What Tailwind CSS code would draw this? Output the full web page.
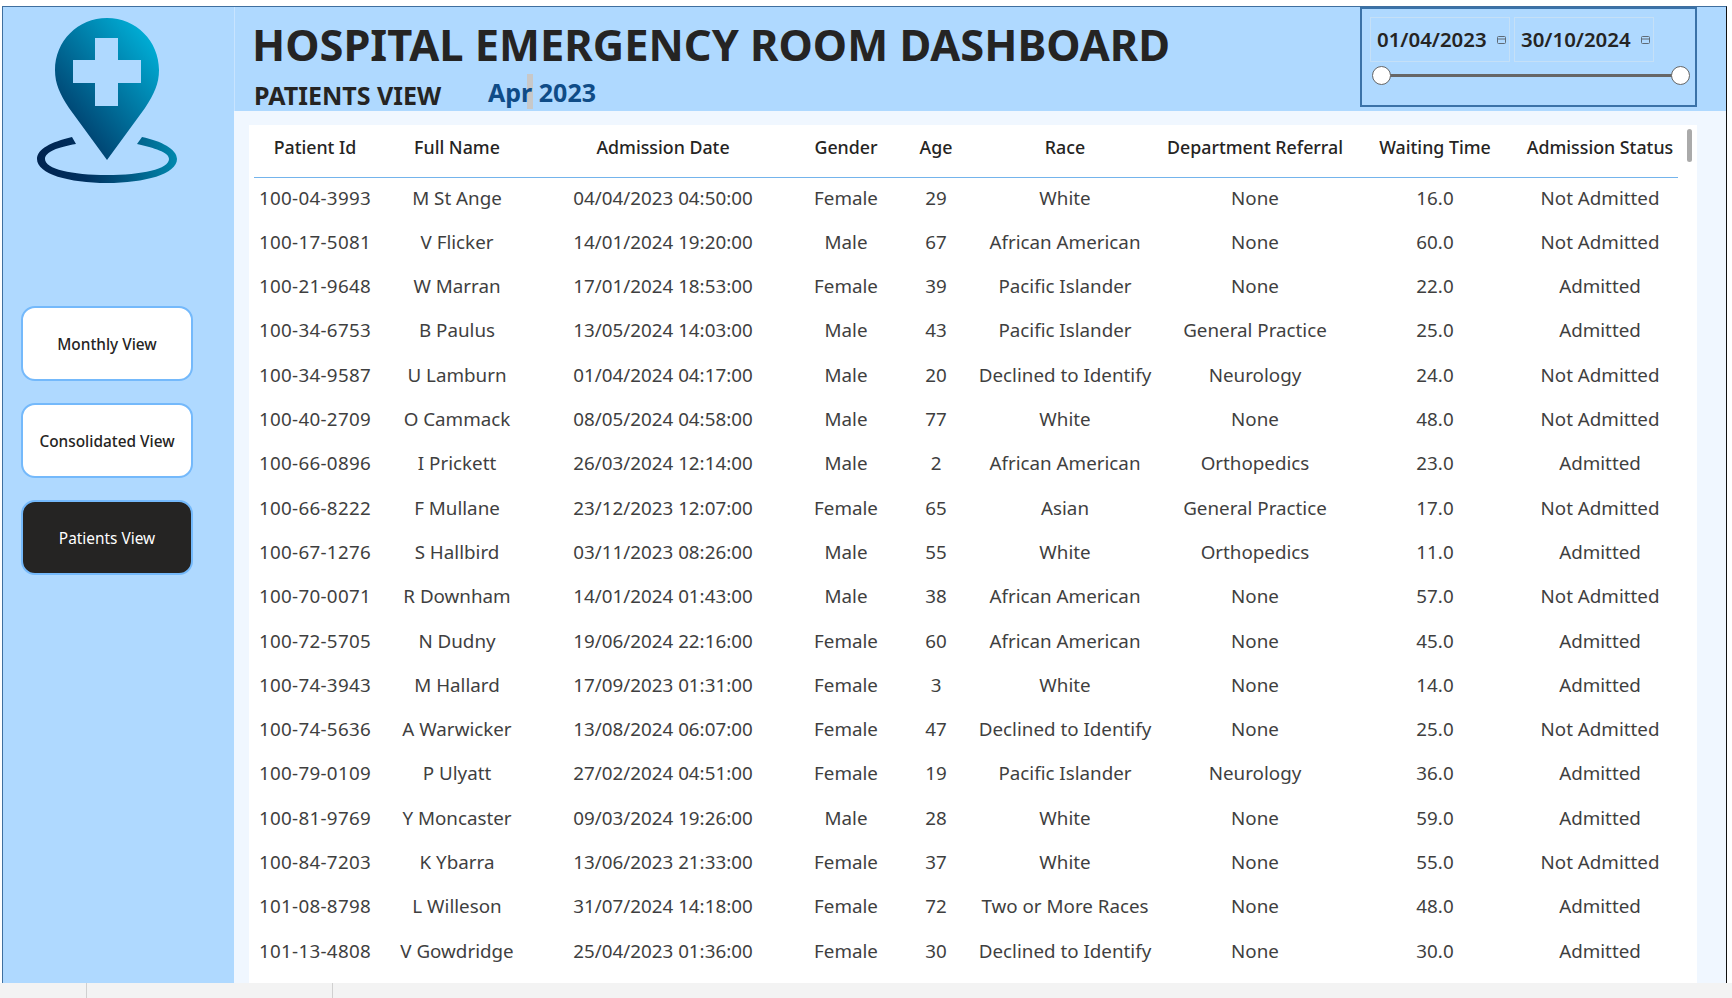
<!DOCTYPE html>
<html lang="en">
<head>
    <meta charset="UTF-8">
    <title>Hospital Emergency Room Dashboard</title>
    <script src="https://cdn.jsdelivr.net/npm/@tailwindcss/browser@4"></script>
</head>
<body class="h-screen flex flex-col bg-white overflow-hidden font-['Noto_Sans',sans-serif] text-[#252423]">
    <div class="h-[6px] shrink-0"></div>
    <div class="flex-1 min-h-0 flex ml-[2px] mr-[5px] border-t border-t-[#3f6f9f] border-l border-l-[#3f6f9f] border-r border-r-[#111]">
        <!-- Sidebar -->
        <aside class="w-[231px] shrink-0 bg-[#afd9ff] flex flex-col">
            <svg class="ml-[30px] mt-[10px] shrink-0" width="146" height="168" viewBox="33 17 146 168">
                <defs>
                    <linearGradient id="pin" x1="1" y1="0" x2="0.15" y2="0.95">
                        <stop offset="0" stop-color="#00bfe6"/>
                        <stop offset="1" stop-color="#00305f"/>
                    </linearGradient>
                    <linearGradient id="ring" x1="1" y1="0" x2="0" y2="0">
                        <stop offset="0" stop-color="#0088ad"/>
                        <stop offset="0.65" stop-color="#00305f"/>
                        <stop offset="1" stop-color="#00234f"/>
                    </linearGradient>
                </defs>
                <path fill="url(#pin)" fill-rule="evenodd" d="M107 18C78 18 55 41 55 70C55 84 60 94 69 108L107 160L145 108C154 94 159 84 159 70C159 41 136 18 107 18ZM95 38H118V60H141V83H118V106H95V83H73V60H95Z"/>
                <path fill="url(#ring)" d="M72 137C51 142 37 149 37 159C37 174 69 183 107 183C145 183 177 174 177 159C177 149 161 141 142 137L137 144C154 148 169 152 169 159C169 169 142 175 107 175C72 175 45 169 45 159C45 152 58 147 76 144Z"/>
            </svg>
            <nav class="ml-[18px] mt-[121px] flex flex-col gap-[22px] w-[172px] text-[15.4px] font-medium">
                <button class="h-[75px] pt-[3px] rounded-[14px] border-2 border-[#74b9fb] bg-white">Monthly View</button>
                <button class="h-[75px] pt-[3px] rounded-[14px] border-2 border-[#74b9fb] bg-white">Consolidated View</button>
                <button class="h-[75px] pt-[3px] rounded-[14px] border-2 border-[#74b9fb] bg-[#252423] text-white font-normal">Patients View</button>
            </nav>
        </aside>

        <main class="flex-1 min-w-0 flex flex-col bg-[#f0f7ff]">
            <!-- Header -->
            <header class="h-[104px] shrink-0 bg-[#afd9ff] border-l border-l-[#c8e4ff] flex justify-between relative">
                <div class="pl-[17px]">
                    <h1 class="text-[43.4px] leading-[58px] mt-[9px] font-bold whitespace-nowrap">HOSPITAL EMERGENCY ROOM DASHBOARD</h1>
                    <div class="flex mt-[1px]">
                        <h2 class="text-[25px] leading-[34px] font-bold w-[233px] pl-[2px] mt-[3px]">PATIENTS VIEW</h2>
                        <span class="text-[25px] leading-[34px] font-bold text-[#0f4c87] relative ml-[3px]"><span class="absolute left-[39px] top-[-1px] w-[6px] h-[35px] bg-[#c8c8c8]"></span><span class="relative">Apr</span> 2023</span>
                    </div>
                </div>
                <!-- Date slicer -->
                <div class="w-[337px] h-[100px] mr-[29px] border-2 border-[#3a72a8] pl-[8px] pt-[8px] shrink-0">
                    <div class="flex gap-[4px]">
                        <div class="w-[140px] h-[45px] border border-[#c5e0f7] flex items-center justify-between pl-[6px] pr-[3px] text-[20.4px] font-semibold">01/04/2023
                            <svg width="9" height="8" viewBox="0 0 9 8" fill="none" stroke="#5f6b76"><rect x="0.5" y="0.5" width="8" height="7" rx="1"/><path d="M1 3H8"/></svg>
                        </div>
                        <div class="w-[140px] h-[45px] border border-[#c5e0f7] flex items-center justify-between pl-[6px] pr-[3px] text-[20.4px] font-semibold">30/10/2024
                            <svg width="9" height="8" viewBox="0 0 9 8" fill="none" stroke="#5f6b76"><rect x="0.5" y="0.5" width="8" height="7" rx="1"/><path d="M1 3H8"/></svg>
                        </div>
                    </div>
                    <div class="relative h-[19px] mt-[4px] ml-[2px] w-[318px]">
                        <div class="absolute left-[9px] right-[9px] top-[8px] h-[3px] bg-[#666]"></div>
                        <div class="absolute left-0 top-0 w-[19px] h-[19px] rounded-full bg-white border border-[#666]"></div>
                        <div class="absolute right-0 top-0 w-[19px] h-[19px] rounded-full bg-white border border-[#666]"></div>
                    </div>
                </div>
            </header>

            <!-- Table -->
            <section class="flex-1 min-h-0 mt-[14px] ml-[15px] w-[1448px] bg-white relative overflow-hidden">
                <div class="absolute left-[1438px] top-[4px] w-[5px] h-[33px] rounded-full bg-[#aaa]"></div>
                <table class="ml-[5px] table-fixed w-[1424px] text-center text-[18.8px] text-[#3f3f3f] whitespace-nowrap [&_td]:p-0 [&_td]:pb-[3px] [&_td:first-child]:tracking-[0.3px] [&_tbody_tr]:h-[44.3px]">
                    <colgroup>
                        <col class="w-[122px]"><col class="w-[162px]"><col class="w-[250px]"><col class="w-[116px]"><col class="w-[64px]"><col class="w-[194px]"><col class="w-[186px]"><col class="w-[174px]"><col class="w-[156px]">
                    </colgroup>
                    <thead>
                        <tr class="h-[52px] text-[17.8px] text-[#252423] border-b border-[#74b4ec] [&_th]:font-medium [&_th]:pb-[7px]">
                            <th>Patient Id</th><th>Full Name</th><th>Admission Date</th><th>Gender</th><th>Age</th><th>Race</th><th>Department Referral</th><th>Waiting Time</th><th>Admission Status</th>
                        </tr>
                    </thead>
                    <tbody>
                        <tr><td>100-04-3993</td><td>M St Ange</td><td>04/04/2023 04:50:00</td><td>Female</td><td>29</td><td>White</td><td>None</td><td>16.0</td><td>Not Admitted</td></tr>
                        <tr><td>100-17-5081</td><td>V Flicker</td><td>14/01/2024 19:20:00</td><td>Male</td><td>67</td><td>African American</td><td>None</td><td>60.0</td><td>Not Admitted</td></tr>
                        <tr><td>100-21-9648</td><td>W Marran</td><td>17/01/2024 18:53:00</td><td>Female</td><td>39</td><td>Pacific Islander</td><td>None</td><td>22.0</td><td>Admitted</td></tr>
                        <tr><td>100-34-6753</td><td>B Paulus</td><td>13/05/2024 14:03:00</td><td>Male</td><td>43</td><td>Pacific Islander</td><td>General Practice</td><td>25.0</td><td>Admitted</td></tr>
                        <tr><td>100-34-9587</td><td>U Lamburn</td><td>01/04/2024 04:17:00</td><td>Male</td><td>20</td><td>Declined to Identify</td><td>Neurology</td><td>24.0</td><td>Not Admitted</td></tr>
                        <tr><td>100-40-2709</td><td>O Cammack</td><td>08/05/2024 04:58:00</td><td>Male</td><td>77</td><td>White</td><td>None</td><td>48.0</td><td>Not Admitted</td></tr>
                        <tr><td>100-66-0896</td><td>I Prickett</td><td>26/03/2024 12:14:00</td><td>Male</td><td>2</td><td>African American</td><td>Orthopedics</td><td>23.0</td><td>Admitted</td></tr>
                        <tr><td>100-66-8222</td><td>F Mullane</td><td>23/12/2023 12:07:00</td><td>Female</td><td>65</td><td>Asian</td><td>General Practice</td><td>17.0</td><td>Not Admitted</td></tr>
                        <tr><td>100-67-1276</td><td>S Hallbird</td><td>03/11/2023 08:26:00</td><td>Male</td><td>55</td><td>White</td><td>Orthopedics</td><td>11.0</td><td>Admitted</td></tr>
                        <tr><td>100-70-0071</td><td>R Downham</td><td>14/01/2024 01:43:00</td><td>Male</td><td>38</td><td>African American</td><td>None</td><td>57.0</td><td>Not Admitted</td></tr>
                        <tr><td>100-72-5705</td><td>N Dudny</td><td>19/06/2024 22:16:00</td><td>Female</td><td>60</td><td>African American</td><td>None</td><td>45.0</td><td>Admitted</td></tr>
                        <tr><td>100-74-3943</td><td>M Hallard</td><td>17/09/2023 01:31:00</td><td>Female</td><td>3</td><td>White</td><td>None</td><td>14.0</td><td>Admitted</td></tr>
                        <tr><td>100-74-5636</td><td>A Warwicker</td><td>13/08/2024 06:07:00</td><td>Female</td><td>47</td><td>Declined to Identify</td><td>None</td><td>25.0</td><td>Not Admitted</td></tr>
                        <tr><td>100-79-0109</td><td>P Ulyatt</td><td>27/02/2024 04:51:00</td><td>Female</td><td>19</td><td>Pacific Islander</td><td>Neurology</td><td>36.0</td><td>Admitted</td></tr>
                        <tr><td>100-81-9769</td><td>Y Moncaster</td><td>09/03/2024 19:26:00</td><td>Male</td><td>28</td><td>White</td><td>None</td><td>59.0</td><td>Admitted</td></tr>
                        <tr><td>100-84-7203</td><td>K Ybarra</td><td>13/06/2023 21:33:00</td><td>Female</td><td>37</td><td>White</td><td>None</td><td>55.0</td><td>Not Admitted</td></tr>
                        <tr><td>101-08-8798</td><td>L Willeson</td><td>31/07/2024 14:18:00</td><td>Female</td><td>72</td><td>Two or More Races</td><td>None</td><td>48.0</td><td>Admitted</td></tr>
                        <tr><td>101-13-4808</td><td>V Gowdridge</td><td>25/04/2023 01:36:00</td><td>Female</td><td>30</td><td>Declined to Identify</td><td>None</td><td>30.0</td><td>Admitted</td></tr>
                    </tbody>
                </table>
            </section>
        </main>
    </div>
    <!-- Bottom bar -->
    <div class="h-[15px] shrink-0 bg-[#f3f3f3] flex">
        <div class="w-[87px] border-r border-[#d0d0d0]"></div>
        <div class="w-[246px] border-r border-[#d0d0d0]"></div>
    </div>
</body>
</html>
